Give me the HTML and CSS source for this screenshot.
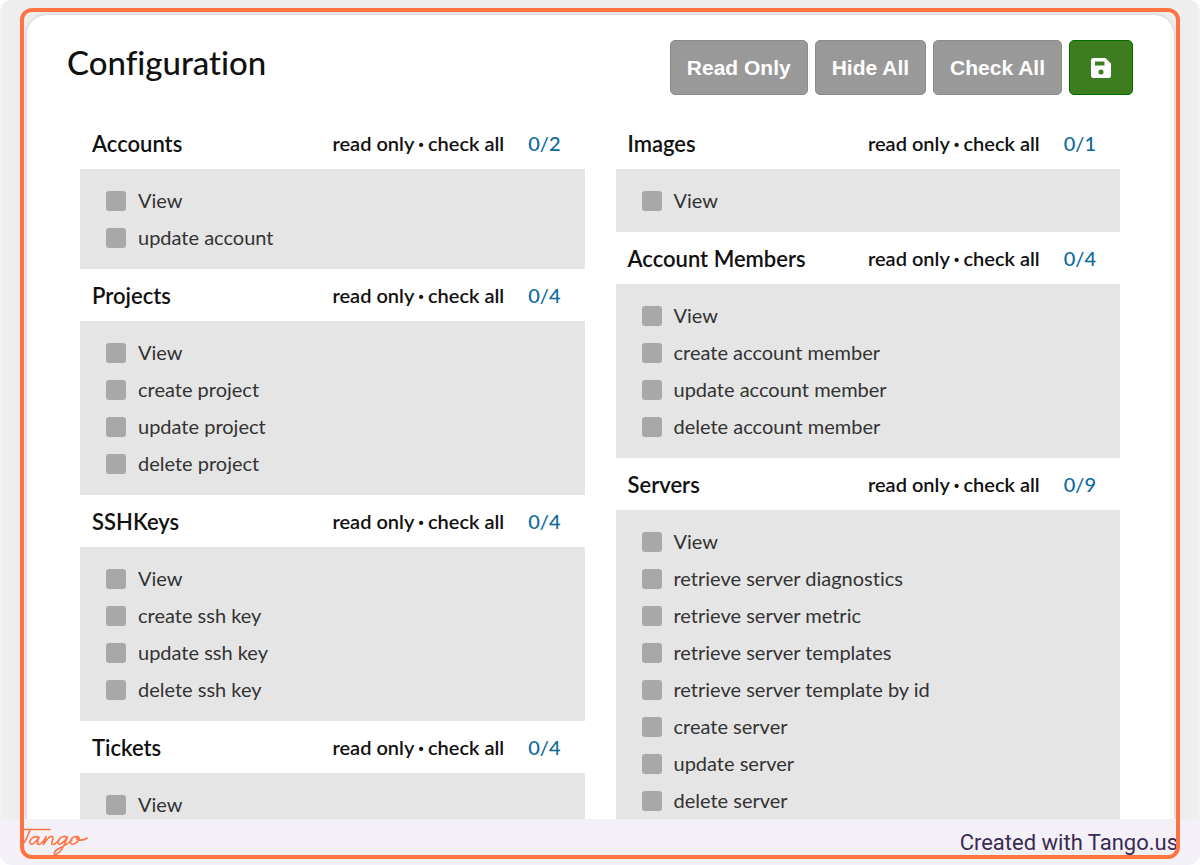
FILE: index.html
```html
<!DOCTYPE html>
<html lang="en">
<head>
<meta charset="utf-8">
<title>Configuration</title>
<link rel="stylesheet" href="styles.css">
</head>
<body>
<div class="page">
  <main class="stage">
    <div class="card">
      <header class="card-header">
        <h1 class="title">Configuration</h1>
        <div class="actions">
          <button class="btn" type="button">Read Only</button>
          <button class="btn" type="button">Hide All</button>
          <button class="btn" type="button">Check All</button>
          <button class="btn btn-save" type="button" aria-label="Save">
            <svg class="save-icon" viewBox="0 0 20 20" aria-hidden="true"><path fill="#fff" fill-rule="evenodd" d="M2.500 0H14.500L20 5.500V17.500Q20 20 17.500 20H2.500Q0 20 0 17.500V2.500Q0 0 2.500 0ZM4 3.500V7.500H13.500V3.500ZM10 11.500A2.500 2.500 0 1 0 10 16.500A2.500 2.500 0 1 0 10 11.500Z"/></svg>
          </button>
        </div>
      </header>
      <div class="columns">
        <div class="column">
          <section>
            <div class="group-head"><h2 class="group-title">Accounts</h2><div class="group-links"><button class="link" type="button">read only</button><span class="dot">·</span><button class="link" type="button">check all</button></div><span class="count">0/2</span></div>
            <div class="panel">
              <label class="row"><input class="box" type="checkbox">View</label>
              <label class="row"><input class="box" type="checkbox">update account</label>
            </div>
          </section>
          <section>
            <div class="group-head"><h2 class="group-title">Projects</h2><div class="group-links"><button class="link" type="button">read only</button><span class="dot">·</span><button class="link" type="button">check all</button></div><span class="count">0/4</span></div>
            <div class="panel">
              <label class="row"><input class="box" type="checkbox">View</label>
              <label class="row"><input class="box" type="checkbox">create project</label>
              <label class="row"><input class="box" type="checkbox">update project</label>
              <label class="row"><input class="box" type="checkbox">delete project</label>
            </div>
          </section>
          <section>
            <div class="group-head"><h2 class="group-title">SSHKeys</h2><div class="group-links"><button class="link" type="button">read only</button><span class="dot">·</span><button class="link" type="button">check all</button></div><span class="count">0/4</span></div>
            <div class="panel">
              <label class="row"><input class="box" type="checkbox">View</label>
              <label class="row"><input class="box" type="checkbox">create ssh key</label>
              <label class="row"><input class="box" type="checkbox">update ssh key</label>
              <label class="row"><input class="box" type="checkbox">delete ssh key</label>
            </div>
          </section>
          <section>
            <div class="group-head"><h2 class="group-title">Tickets</h2><div class="group-links"><button class="link" type="button">read only</button><span class="dot">·</span><button class="link" type="button">check all</button></div><span class="count">0/4</span></div>
            <div class="panel">
              <label class="row"><input class="box" type="checkbox">View</label>
            </div>
          </section>
        </div>
        <div class="column">
          <section>
            <div class="group-head"><h2 class="group-title">Images</h2><div class="group-links"><button class="link" type="button">read only</button><span class="dot">·</span><button class="link" type="button">check all</button></div><span class="count">0/1</span></div>
            <div class="panel">
              <label class="row"><input class="box" type="checkbox">View</label>
            </div>
          </section>
          <section>
            <div class="group-head"><h2 class="group-title">Account Members</h2><div class="group-links"><button class="link" type="button">read only</button><span class="dot">·</span><button class="link" type="button">check all</button></div><span class="count">0/4</span></div>
            <div class="panel">
              <label class="row"><input class="box" type="checkbox">View</label>
              <label class="row"><input class="box" type="checkbox">create account member</label>
              <label class="row"><input class="box" type="checkbox">update account member</label>
              <label class="row"><input class="box" type="checkbox">delete account member</label>
            </div>
          </section>
          <section>
            <div class="group-head"><h2 class="group-title">Servers</h2><div class="group-links"><button class="link" type="button">read only</button><span class="dot">·</span><button class="link" type="button">check all</button></div><span class="count">0/9</span></div>
            <div class="panel">
              <label class="row"><input class="box" type="checkbox">View</label>
              <label class="row"><input class="box" type="checkbox">retrieve server diagnostics</label>
              <label class="row"><input class="box" type="checkbox">retrieve server metric</label>
              <label class="row"><input class="box" type="checkbox">retrieve server templates</label>
              <label class="row"><input class="box" type="checkbox">retrieve server template by id</label>
              <label class="row"><input class="box" type="checkbox">create server</label>
              <label class="row"><input class="box" type="checkbox">update server</label>
              <label class="row"><input class="box" type="checkbox">delete server</label>
            </div>
          </section>
        </div>
      </div>
    </div>
  </main>
  <footer class="footer">
    <svg class="logo" viewBox="0 0 70 30" role="img" aria-label="Tango"><g fill="none" stroke="#ff7442" stroke-width="1.600" stroke-linecap="round" stroke-linejoin="round"><path d="M2 2.500H28"/><path d="M8 3C6 8 4 14 1 17"/><path d="M17 11C13 7 7 13 8 16C9 19 14 16 17 10C15 15 15 18 17 17.500C20 17 23 12 24 9.500L21.500 17.500C25 11 29 8 31 10C32 12 28 17 30.500 17.500C33 18 35 15 37 13"/><path d="M45 10.500C41 7 35 13 36 16C37 19 42 16 45.500 10C43 17 39 26 34 27.500C31 28 32 24 36 22C42 19 47 16 50 13"/><path d="M55 9.500C50 9 47 14 49 16.500C52 19 59 13 56.500 10C55 8 53 12 57 13C60 13.500 63 12.500 65 11"/></g></svg>
    <span class="credit">Created with Tango.us</span>
  </footer>
  <div class="highlight"></div>
</div>
</body>
</html>
```
FILE: styles.css
```css
* { box-sizing: border-box; }
body {
  margin: 0;
  background: #fff;
  font-family: Lato, "Open Sans", sans-serif;
  font-variant-ligatures: no-common-ligatures;
  color: #111;
}
.page {
  position: relative;
  display: flex;
  flex-direction: column;
  height: 100vh;
  overflow: hidden;
  border-radius: 12px;
  background: #f3f1f7;
}
.stage {
  flex: 1;
  min-height: 0;
  margin: 0 2px;
  padding: 15px 24px 0 25px;
  overflow: hidden;
  border-radius: 8px 8px 0 0;
  background: #eee;
}
.card {
  padding: 25px 24px 0 40px;
  border-radius: 20px 20px 0 0;
  background: #fff;
  box-shadow: 0 0 3px 1px #d4d4da;
}
.card-header {
  display: flex;
  justify-content: space-between;
  align-items: flex-start;
  padding-right: 17px;
}
.title {
  margin: 0;
  font-size: 33px;
  line-height: 44px;
  font-weight: 500;
}
.actions { display: flex; gap: 7px; }
.btn {
  height: 55px;
  padding: 0 16px;
  border: 1px solid #8c8c8c;
  border-radius: 5px;
  background: #999;
  color: #fff;
  font: bold 21px "Liberation Sans", Arial, sans-serif;
}
.btn-save {
  padding: 0 21px;
  border-color: #006a00;
  background: #3d7c1f;
}
.save-icon { display: block; width: 20px; height: 20px; }
.columns {
  display: grid;
  grid-template-columns: 1fr 1fr;
  gap: 31px;
  padding: 22px 30px 0 13px;
}
.group-head {
  display: flex;
  align-items: center;
  height: 52px;
  padding: 0 24px 0 12px;
  font-size: 20px;
}
.group-title {
  flex: 1;
  margin: 0;
  font-size: 22px;
  font-weight: 600;
}
.group-links {
  display: flex;
  font-weight: 600;
  margin-right: 24px;
}
.dot { padding: 0 4px; font-weight: 900; }
.link {
  padding: 0;
  border: 0;
  background: none;
  color: inherit;
  font: inherit;
  font-variant-ligatures: inherit;
}
.count { color: #0b6a9c; font-weight: 500; }
.panel {
  padding: 13px 26px;
  background: #e5e5e5;
}
.row {
  display: flex;
  align-items: center;
  gap: 12px;
  height: 37px;
  color: #333;
  font-size: 20px;
  line-height: 25px;
}
.box {
  appearance: none;
  width: 20px;
  height: 20px;
  margin: 0;
  border-radius: 3px;
  background: #a8a8a8;
}
.footer {
  display: flex;
  justify-content: space-between;
  align-items: center;
  height: 46px;
  padding: 0 22px;
}
.logo { width: 70px; height: 30px; }
.credit {
  color: #3b2a52;
  font: 22px Roboto, "Open Sans", sans-serif;
}
.highlight {
  position: absolute;
  inset: 8px 20px 6px;
  border: 4px solid #ff7442;
  border-radius: 12px;
  pointer-events: none;
}
```
